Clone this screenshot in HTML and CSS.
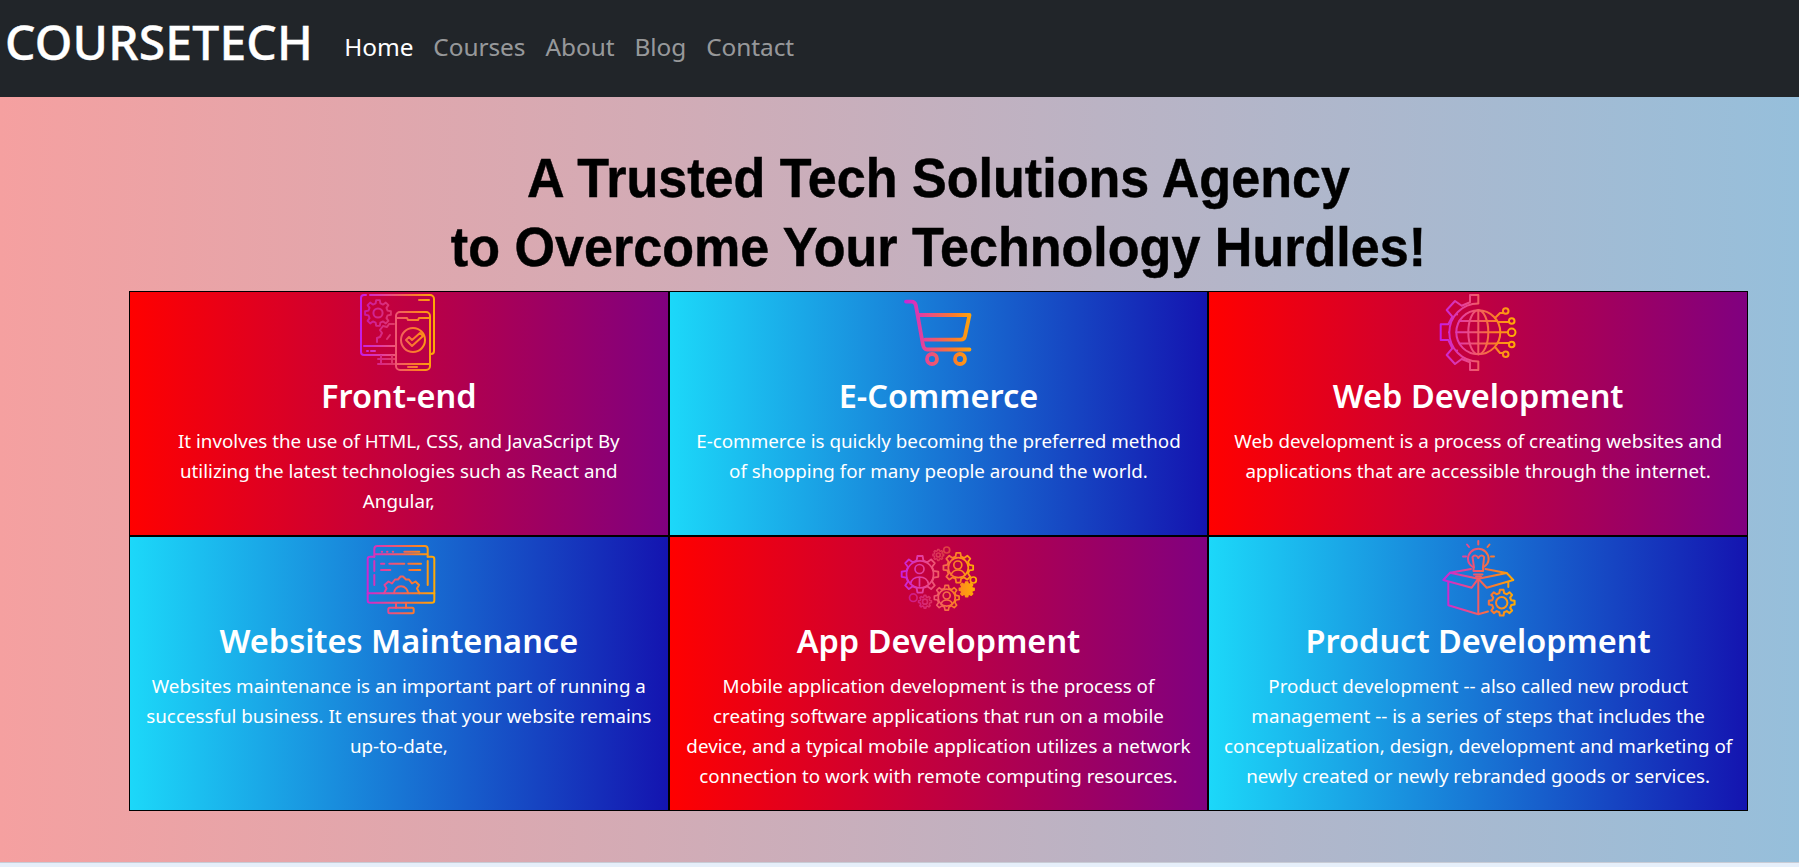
FILE: index.html
```html
<!DOCTYPE html>
<html lang="en">
<head>
<meta charset="utf-8">
<title>COURSETECH</title>
<link rel="stylesheet" href="styles.css">
</head>
<body>
<svg class="defs" width="0" height="0" aria-hidden="true">
  <defs>
    <linearGradient id="ink" gradientUnits="userSpaceOnUse" x1="2" y1="0" x2="78" y2="0">
      <stop offset="0" stop-color="#c41ee6"/>
      <stop offset="0.35" stop-color="#e9478f"/>
      <stop offset="0.7" stop-color="#fb7a2c"/>
      <stop offset="1" stop-color="#ffb000"/>
    </linearGradient>
    <polygon id="gear" points="-1.84,-7.37 -1.39,-9.9 1.39,-9.9 1.84,-7.37 3.91,-6.51 6.02,-7.99 7.99,-6.02 6.51,-3.91 7.37,-1.84 9.9,-1.39 9.9,1.39 7.37,1.84 6.51,3.91 7.99,6.02 6.02,7.99 3.91,6.51 1.84,7.37 1.39,9.9 -1.39,9.9 -1.84,7.37 -3.91,6.51 -6.02,7.99 -7.99,6.02 -6.51,3.91 -7.37,1.84 -9.9,1.39 -9.9,-1.39 -7.37,-1.84 -6.51,-3.91 -7.99,-6.02 -6.02,-7.99 -3.91,-6.51"/>
    <mask id="m-front" maskUnits="userSpaceOnUse" x="0" y="0" width="80" height="80">
      <g fill="none" stroke="#fff" stroke-width="2" stroke-linecap="round" stroke-linejoin="round">
        <path d="M36 62H5a3 3 0 0 1-3-3V5a3 3 0 0 1 3-3h2M11 2h60a4 4 0 0 1 4 4v52a3 3 0 0 1-3 3M60 7h10M5 53h31M8 58h1M12 58h4"/>
        <g stroke="#b0b0b0">
          <use href="#gear" transform="translate(19 20) scale(1.3)" stroke-width="1.5"/>
          <circle cx="19" cy="20" r="4.6"/>
          <path d="M35 31l-5 0-2 3-4-1-3 4 2 3-2 4-3 1v4M31 42l-3 4"/>
          <path d="M22 63v8M33 63v8M19 66h17M19 71h17"/>
        </g>
        <rect x="37" y="19" width="34" height="58" rx="4"/>
        <path d="M37 25h11l1 2h10l1-2h11M37 71h34M49 74h9"/>
        <circle cx="54" cy="47" r="12"/>
        <path d="M47 47l3-3 3 3 8-7 3 3-11 10z"/>
      </g>
    </mask>
    <mask id="m-cart" maskUnits="userSpaceOnUse" x="0" y="0" width="80" height="80">
      <g fill="none" stroke="#fff" stroke-width="3.800" stroke-linecap="round" stroke-linejoin="round">
        <path d="M8 8.600h5.500c2.500 0 3.900 1.600 4.400 4L25 52c.6 3 1.800 4.500 4 4.500h42.500"/>
        <path d="M20.500 22H71.500l-4.500 21c-.5 2.500-1.800 3.600-4 3.600H27"/>
        <circle cx="34" cy="66" r="5"/>
        <circle cx="62" cy="66" r="5"/>
      </g>
    </mask>
    <mask id="m-web" maskUnits="userSpaceOnUse" x="0" y="0" width="80" height="80">
      <g fill="none" stroke="#fff" stroke-width="2" stroke-linecap="round" stroke-linejoin="round">
        <path d="M40.300 10V2H32V9.300L23.700 12.700 17 8 8.700 17 14.300 23.700 10.300 31.300H2.700V47H10.300L14.300 55.300 8.700 62 17 71 23.700 66 32 69.300V77H40.300V69"/>
        <path d="M40.300 10.500A29 29 0 0 0 40.300 68.500"/>
        <circle cx="40.300" cy="39.300" r="22"/>
        <ellipse cx="40.300" cy="39.300" rx="10" ry="22"/>
        <path d="M40.300 17.300V61.300M18.300 39.300H62.300M21.500 28H59M21.500 50.500H59"/>
        <path d="M57 25l5-5h3M60 29h10.500M62.500 39.300H69.500M60 50h10.500M57 54l5 6h3"/>
        <circle cx="67.700" cy="18" r="2.800"/>
        <circle cx="73.700" cy="28" r="2.800"/>
        <circle cx="73.700" cy="39.300" r="3.800"/>
        <circle cx="73.700" cy="51.500" r="2.800"/>
        <circle cx="67.700" cy="61.300" r="2.800"/>
        <path d="M19 21.500h.1M11 39.300h.1M19 57.500h.1"/>
      </g>
    </mask>
    <mask id="m-site" maskUnits="userSpaceOnUse" x="0" y="0" width="80" height="80">
      <g fill="none" stroke="#fff" stroke-width="2" stroke-linecap="round" stroke-linejoin="round">
        <path d="M15.300 18.700V11a3 3 0 0 1 3-3H65.700a3 3 0 0 1 3 3V18.700M15.300 16.300H68.700"/>
        <path d="M15.300 18.700H11a2.300 2.300 0 0 0-2.300 2.300V62.400a2.300 2.300 0 0 0 2.300 2.300H73a2.300 2.300 0 0 0 2.300-2.300V21a2.300 2.300 0 0 0-2.300-2.300H68.700"/>
        <path d="M8.700 55.300H75.300M37 64.700V69.700M47 64.700V69.700"/>
        <rect x="29.300" y="69.700" width="25.400" height="5.600" rx="1.500"/>
        <path d="M22.700 13.700h.5M28 13.700h.5M33.700 13.700h.5M45.300 13.700H60.300"/>
        <path d="M22 25.700H25.300M30.300 25.700H45.300M49.300 25.700H62M22 32H31.300M50.300 32H61.300M15.300 23V33M15.300 37V47M68.700 23V47"/>
        <path d="M25 55.300L27.500 50.500 25.500 47 29.500 43.500 33 45.500 36 41.500H39L41.500 38.500H44L47 41.500H50L53 45.500 56.500 43.500 60 47 58 50.500 60.500 55.300"/>
        <path d="M35 55.300a7 7 0 0 1 14 0"/>
      </g>
    </mask>
    <mask id="m-app" maskUnits="userSpaceOnUse" x="0" y="0" width="80" height="80">
      <g fill="none" stroke="#fff" stroke-width="1.700" stroke-linecap="round" stroke-linejoin="round">
        <use href="#gear" transform="translate(22 36.300) scale(1.850)" stroke-width="1"/>
        <circle cx="22" cy="36.300" r="13.500"/>
        <circle cx="21.500" cy="31" r="4.500"/>
        <path d="M12.500 46c1-5 4-7 9-7s8 2 9 7M21.500 39v9"/>
        <use href="#gear" transform="translate(60.300 29.700) scale(1.500)" stroke-width="1.200"/>
        <circle cx="60.300" cy="29.700" r="10"/>
        <circle cx="59.800" cy="27" r="4"/>
        <path d="M53 37c1-3 3-5 7-5s6 2 7 5"/>
        <use href="#gear" transform="translate(48.700 59.700) scale(1.250)" stroke-width="1.300"/>
        <circle cx="48.700" cy="59.700" r="8.500"/>
        <circle cx="48.700" cy="57.500" r="3.500"/>
        <path d="M43 66c1-3 3-4 5.700-4s4.700 1 5.700 4"/>
        <use href="#gear" transform="translate(68.700 51.300) scale(.75)" stroke-width="2" fill="#fff"/>
        <circle cx="75.300" cy="42" r="3"/>
        <g stroke="#999">
          <use href="#gear" transform="translate(40.300 17) scale(.55)" stroke-width="2.500"/>
          <circle cx="40.300" cy="17" r="2"/>
          <circle cx="48.700" cy="12" r="3"/>
          <use href="#gear" transform="translate(27 63.700) scale(.65)" stroke-width="2.400"/>
          <circle cx="27" cy="63.700" r="2.500"/>
          <circle cx="15.300" cy="59.700" r="3.800"/>
        </g>
      </g>
    </mask>
    <mask id="m-product" maskUnits="userSpaceOnUse" x="0" y="0" width="80" height="80">
      <g fill="none" stroke="#fff" stroke-width="2" stroke-linecap="round" stroke-linejoin="round">
        <path d="M35.500 29.500C31.500 27 30 24.500 30 21a10.300 10.300 0 0 1 20.600 0c0 3.500-1.500 6-5.500 8.500V33H35.500zM36 36.500H44.500M38 38.800H43"/>
        <path d="M36 29.500L34.500 19c2-2.500 4.500-1.500 5.800 1 1.300-2.500 3.800-3.500 5.800-1L45 29.500"/>
        <path d="M40.300 3V6.500M29 6.500L31 9M51.500 6.500L49.500 9M25 18.500H28M53 18.500H56"/>
        <path d="M12 34.700L33 31M68.500 35L47.500 31"/>
        <path d="M40.300 40.700L33.700 49.700 5.300 42 12 34.700 40.300 40.700 68.700 35 75.300 42 48.700 49.700z"/>
        <path d="M10.300 44V67.300L40.300 76.300V41M40.300 76.300L50 73.500M70.300 44V49"/>
        <use href="#gear" transform="translate(63.700 64.700) scale(1.300)" stroke-width="1.600"/>
        <circle cx="63.700" cy="64.700" r="5.700"/>
      </g>
    </mask>
  </defs>
</svg>

<nav class="navbar">
  <a class="brand" href="#">COURSETECH</a>
  <ul class="nav-links">
    <li><a class="nav-link active" href="#">Home</a></li>
    <li><a class="nav-link" href="#">Courses</a></li>
    <li><a class="nav-link" href="#">About</a></li>
    <li><a class="nav-link" href="#">Blog</a></li>
    <li><a class="nav-link" href="#">Contact</a></li>
  </ul>
</nav>

<main class="hero">
  <h1 class="hero-title">A Trusted Tech Solutions Agency<br>to Overcome Your Technology Hurdles!</h1>
  <section class="cards">
    <article class="card card-red">
      <svg class="icon" viewBox="0 0 80 80"><rect width="80" height="80" fill="url(#ink)" mask="url(#m-front)"/></svg>
      <h2 class="card-title">Front-end</h2>
      <p class="card-text">It involves the use of HTML, CSS, and JavaScript By utilizing the latest technologies such as React and Angular,</p>
    </article>
    <article class="card card-blue">
      <svg class="icon" viewBox="0 0 80 80"><rect width="80" height="80" fill="url(#ink)" mask="url(#m-cart)"/></svg>
      <h2 class="card-title">E-Commerce</h2>
      <p class="card-text">E-commerce is quickly becoming the preferred method<br>of shopping for many people around the world.</p>
    </article>
    <article class="card card-red">
      <svg class="icon" viewBox="0 0 80 80"><rect width="80" height="80" fill="url(#ink)" mask="url(#m-web)"/></svg>
      <h2 class="card-title">Web Development</h2>
      <p class="card-text">Web development is a process of creating websites and applications that are accessible through the internet.</p>
    </article>
    <article class="card card-blue">
      <svg class="icon" viewBox="0 0 80 80"><rect width="80" height="80" fill="url(#ink)" mask="url(#m-site)"/></svg>
      <h2 class="card-title">Websites Maintenance</h2>
      <p class="card-text">Websites maintenance is an important part of running a successful business. It ensures that your website remains up-to-date,</p>
    </article>
    <article class="card card-red">
      <svg class="icon" viewBox="0 0 80 80"><rect width="80" height="80" fill="url(#ink)" mask="url(#m-app)"/></svg>
      <h2 class="card-title">App Development</h2>
      <p class="card-text">Mobile application development is the process of<br>creating software applications that run on a mobile device, and a typical mobile application utilizes a network connection to work with remote computing resources.</p>
    </article>
    <article class="card card-blue">
      <svg class="icon" viewBox="0 0 80 80"><rect width="80" height="80" fill="url(#ink)" mask="url(#m-product)"/></svg>
      <h2 class="card-title">Product Development</h2>
      <p class="card-text">Product development -- also called new product management -- is a series of steps that includes the conceptualization, design, development and marketing of newly created or newly rebranded goods or services.</p>
    </article>
  </section>
</main>
</body>
</html>
```

FILE: styles.css
```css
* {
  box-sizing: border-box;
}

html {
  background: #e6effa;
}

body {
  margin: 0;
  overflow: hidden;
  font-family: "Noto Sans", "Liberation Sans", sans-serif;
}

.defs {
  position: absolute;
}

.navbar {
  display: flex;
  align-items: center;
  height: 97px;
  padding: 0 0 15px 5px;
  background: #212529;
}

.brand {
  color: #fff;
  font-size: 48px;
  font-weight: 500;
  letter-spacing: 0.2px;
  text-decoration: none;
  -webkit-text-stroke: 0.4px #fff;
}

.nav-links {
  display: flex;
  gap: 20px;
  margin: 11px 0 0 31px;
  padding: 0;
  list-style: none;
}

.nav-link {
  color: rgba(255, 255, 255, 0.55);
  font-size: 24.4px;
  letter-spacing: -0.05px;
  text-decoration: none;
}

.nav-link.active {
  color: #fff;
}

.hero {
  height: 766px;
  padding: 46px 51px 0 129px;
  border-bottom: 1px solid #c9ccd6;
  background: linear-gradient(90deg, #f5a0a0, #96bfdb);
}

.hero-title {
  margin: 0;
  color: #000;
  font-family: "Liberation Sans", sans-serif;
  font-size: 56px;
  font-weight: 700;
  line-height: 69px;
  text-align: center;
  transform: scaleX(0.93);
  -webkit-text-stroke: 0.5px #000;
}

.cards {
  display: grid;
  grid-template-columns: repeat(3, 1fr);
  margin-top: 10px;
}

.card {
  display: flex;
  flex-direction: column;
  align-items: center;
  padding: 0 14px 19px;
  border: 1px solid #000;
  color: #fff;
  text-align: center;
}

.card-red {
  background: linear-gradient(90deg, #ff0000, #800080);
}

.card-blue {
  background: linear-gradient(90deg, #1cd8f9, #1414b0);
}

.icon {
  display: block;
  width: 80px;
  height: 80px;
  flex: none;
  margin-top: 1px;
  filter: blur(0.5px);
}

.card-title {
  margin: 0 0 7px;
  font-size: 32.5px;
  font-weight: 600;
  line-height: 46px;
}

.card-text {
  margin: 0;
  font-size: 18.8px;
  line-height: 30px;
}
```
